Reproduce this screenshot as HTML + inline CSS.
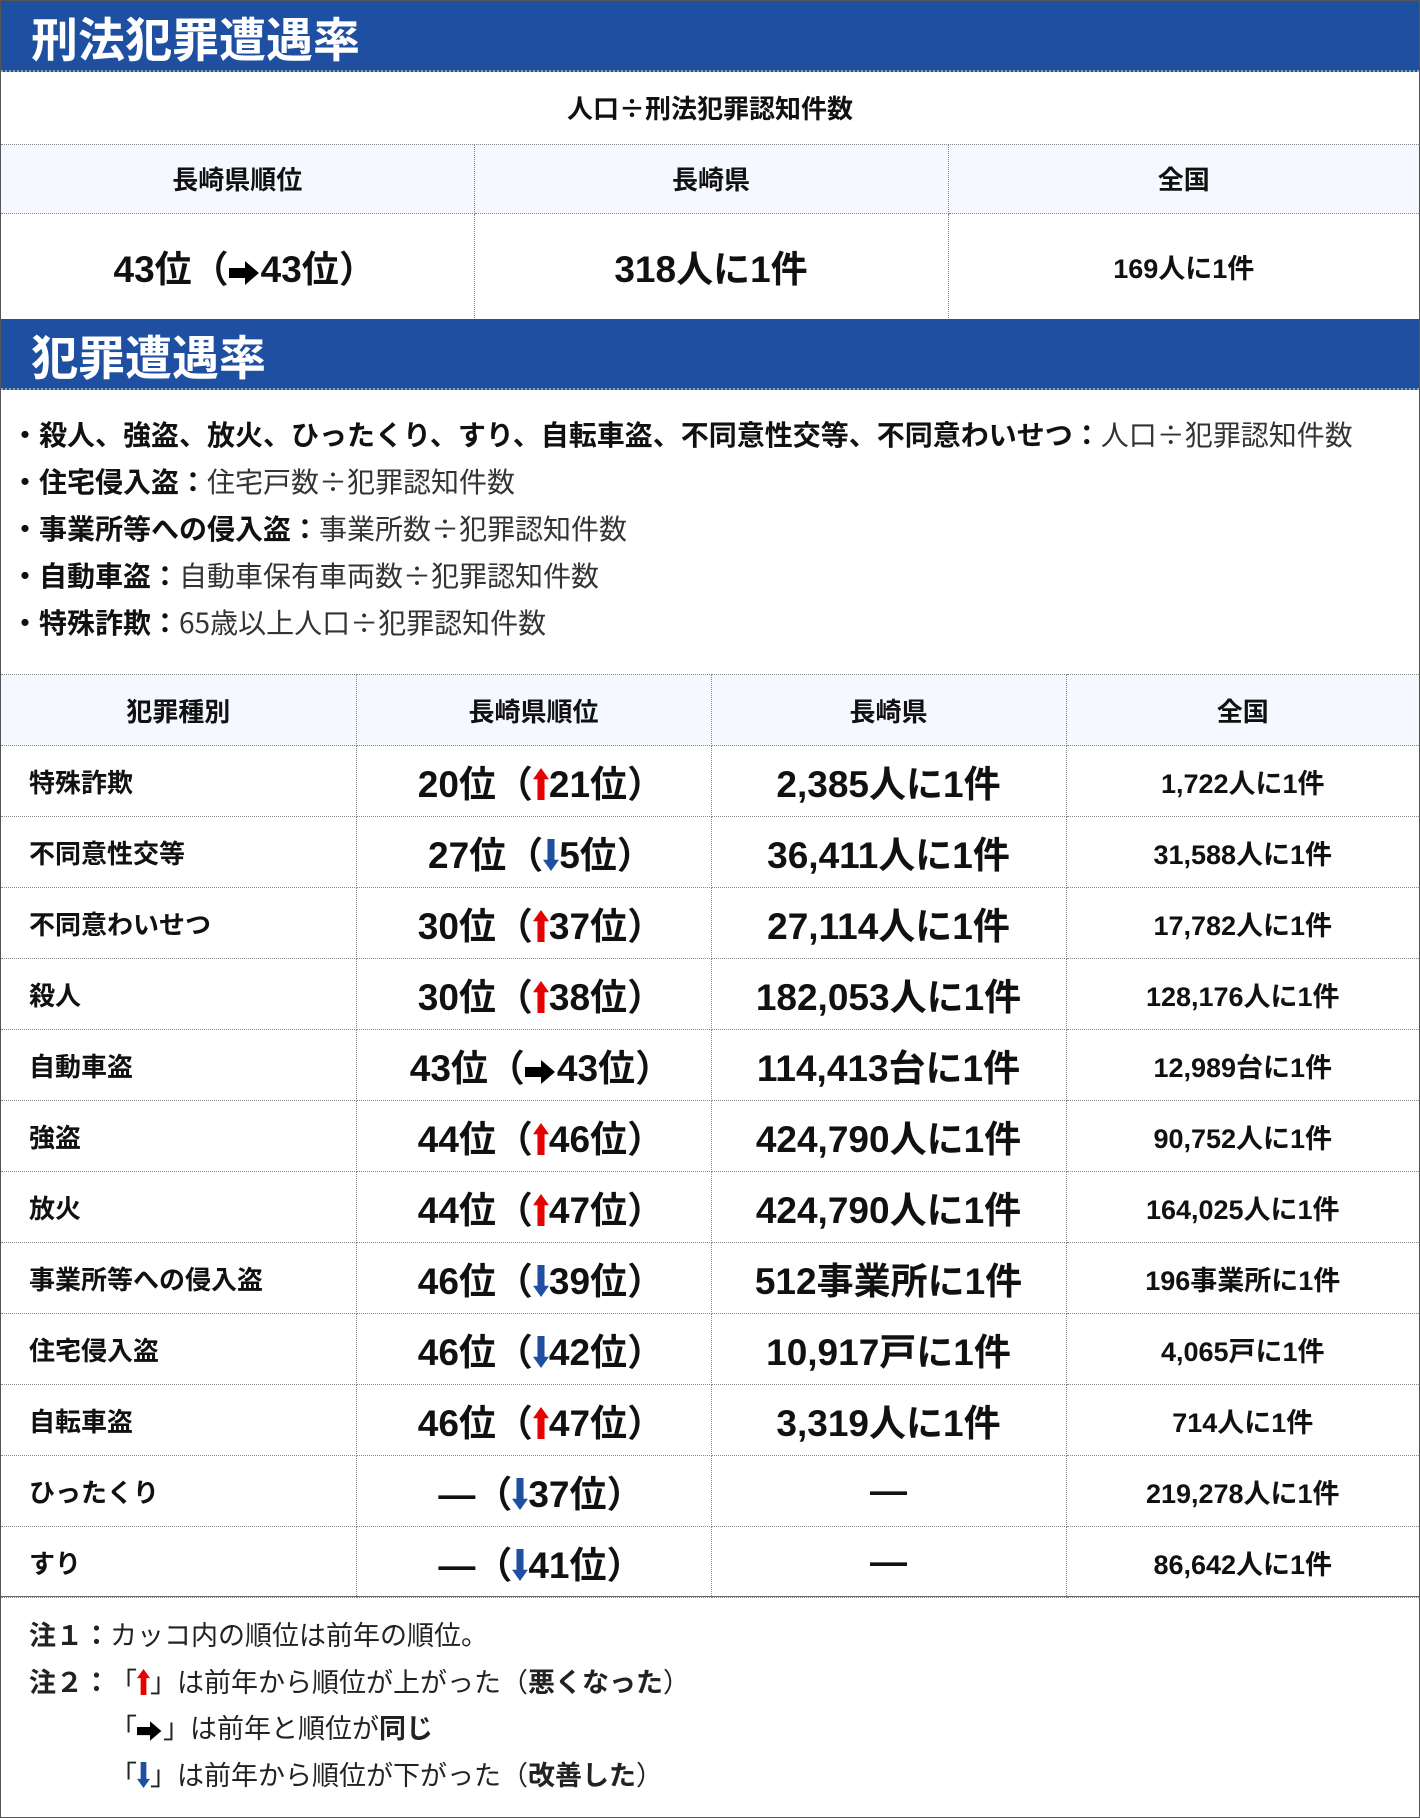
<!DOCTYPE html>
<html><head><meta charset="utf-8">
<style>
*{box-sizing:border-box;margin:0;padding:0}
body{width:1420px;height:1818px;background:#fff;font-family:"Liberation Sans","Noto Sans CJK JP",sans-serif;color:#111;overflow:hidden}
.wrap{position:absolute;left:0;top:0;width:1420px;height:1818px;border:1px solid #555}
.bar{position:absolute;left:0;width:1418px;height:71px;background:#1f4fa1;color:#fff;font-weight:bold;font-size:47px;line-height:71px;padding-left:30px;border-bottom:2px dotted #8aa;font-family:"Noto Sans CJK JP",sans-serif}
table{position:absolute;left:0;border-collapse:collapse;width:1418px;table-layout:fixed}
td{border:1px dotted #888;text-align:center;font-weight:bold;vertical-align:middle}
tr td:first-child{border-left:none}tr td:last-child{border-right:none}
.hd td{background:#f5f8fe;font-size:26px}
.b{font-size:37px}
.m{font-size:27px}
.p{font-family:"Noto Sans CJK JP",sans-serif}
.o,.c{display:inline-block;width:1em;font-family:"Noto Sans CJK JP",sans-serif}
.o{text-align:right}.c{text-align:left}
td .o{width:1em;text-align:center}
td .c{width:0.6em;text-align:left}
.nm{text-align:left;padding-left:28px;font-size:26px}
.up,.dn,.rt{display:inline-block;vertical-align:-3px}
.bul{position:absolute;left:10px;top:410px;font-size:28px;line-height:47px;font-family:"Noto Sans CJK JP",sans-serif}
.bul b{font-weight:bold}.bul span{color:#333;font-weight:normal}
.notes{position:absolute;left:28px;top:1610px;font-size:27px;line-height:46.5px;color:#222;font-family:"Noto Sans CJK JP",sans-serif}
</style></head><body>
<div class="wrap">
<div class="bar" style="top:0">刑法犯罪遭遇率</div>
<table style="top:71px">
<colgroup><col style="width:473px"><col style="width:474px"><col></colgroup>
<tr style="height:72px"><td colspan="3" class="p" style="font-size:26px;border-top:none">人口÷刑法犯罪認知件数</td></tr>
<tr class="hd" style="height:69px"><td>長崎県順位</td><td>長崎県</td><td>全国</td></tr>
<tr style="height:106px"><td class="b">43位<span class="o">（</span><svg class="rt" width="32" height="24" viewBox="0 0 16 12"><path d="M0 3.5H8V0L15 6L8 12V8.5H0Z" fill="#000"/></svg>43位<span class="c">）</span></td><td class="b">318人に1件</td><td class="m">169人に1件</td></tr>
</table>
<div class="bar" style="top:318px">犯罪遭遇率</div>
<div class="bul">
<div><b>・殺人、強盗、放火、ひったくり、すり、自転車盗、不同意性交等、不同意わいせつ：</b><span>人口÷犯罪認知件数</span></div>
<div><b>・住宅侵入盗：</b><span>住宅戸数÷犯罪認知件数</span></div>
<div><b>・事業所等への侵入盗：</b><span>事業所数÷犯罪認知件数</span></div>
<div><b>・自動車盗：</b><span>自動車保有車両数÷犯罪認知件数</span></div>
<div><b>・特殊詐欺：</b><span>65歳以上人口÷犯罪認知件数</span></div>
</div>
<table style="top:673px">
<colgroup><col style="width:355px"><col style="width:355px"><col style="width:355px"><col></colgroup>
<tr class="hd" style="height:71px"><td>犯罪種別</td><td>長崎県順位</td><td>長崎県</td><td>全国</td></tr>
<tr style="height:71px"><td class="nm">特殊詐欺</td><td class="b">20位<span class="o">（</span><svg class="up" width="16" height="32" viewBox="0 0 10 20"><path d="M5 0L10 7H7.2V20H2.8V7H0Z" fill="#e60000"/></svg>21位<span class="c">）</span></td><td class="b">2,385人に1件</td><td class="m">1,722人に1件</td></tr>
<tr style="height:71px"><td class="nm">不同意性交等</td><td class="b">27位<span class="o">（</span><svg class="dn" width="16" height="32" viewBox="0 0 10 20"><path d="M5 20L10 13H7.2V0H2.8V13H0Z" fill="#1f4fa1"/></svg>5位<span class="c">）</span></td><td class="b">36,411人に1件</td><td class="m">31,588人に1件</td></tr>
<tr style="height:71px"><td class="nm">不同意わいせつ</td><td class="b">30位<span class="o">（</span><svg class="up" width="16" height="32" viewBox="0 0 10 20"><path d="M5 0L10 7H7.2V20H2.8V7H0Z" fill="#e60000"/></svg>37位<span class="c">）</span></td><td class="b">27,114人に1件</td><td class="m">17,782人に1件</td></tr>
<tr style="height:71px"><td class="nm">殺人</td><td class="b">30位<span class="o">（</span><svg class="up" width="16" height="32" viewBox="0 0 10 20"><path d="M5 0L10 7H7.2V20H2.8V7H0Z" fill="#e60000"/></svg>38位<span class="c">）</span></td><td class="b">182,053人に1件</td><td class="m">128,176人に1件</td></tr>
<tr style="height:71px"><td class="nm">自動車盗</td><td class="b">43位<span class="o">（</span><svg class="rt" width="32" height="24" viewBox="0 0 16 12"><path d="M0 3.5H8V0L15 6L8 12V8.5H0Z" fill="#000"/></svg>43位<span class="c">）</span></td><td class="b">114,413台に1件</td><td class="m">12,989台に1件</td></tr>
<tr style="height:71px"><td class="nm">強盗</td><td class="b">44位<span class="o">（</span><svg class="up" width="16" height="32" viewBox="0 0 10 20"><path d="M5 0L10 7H7.2V20H2.8V7H0Z" fill="#e60000"/></svg>46位<span class="c">）</span></td><td class="b">424,790人に1件</td><td class="m">90,752人に1件</td></tr>
<tr style="height:71px"><td class="nm">放火</td><td class="b">44位<span class="o">（</span><svg class="up" width="16" height="32" viewBox="0 0 10 20"><path d="M5 0L10 7H7.2V20H2.8V7H0Z" fill="#e60000"/></svg>47位<span class="c">）</span></td><td class="b">424,790人に1件</td><td class="m">164,025人に1件</td></tr>
<tr style="height:71px"><td class="nm">事業所等への侵入盗</td><td class="b">46位<span class="o">（</span><svg class="dn" width="16" height="32" viewBox="0 0 10 20"><path d="M5 20L10 13H7.2V0H2.8V13H0Z" fill="#1f4fa1"/></svg>39位<span class="c">）</span></td><td class="b">512事業所に1件</td><td class="m">196事業所に1件</td></tr>
<tr style="height:71px"><td class="nm">住宅侵入盗</td><td class="b">46位<span class="o">（</span><svg class="dn" width="16" height="32" viewBox="0 0 10 20"><path d="M5 20L10 13H7.2V0H2.8V13H0Z" fill="#1f4fa1"/></svg>42位<span class="c">）</span></td><td class="b">10,917戸に1件</td><td class="m">4,065戸に1件</td></tr>
<tr style="height:71px"><td class="nm">自転車盗</td><td class="b">46位<span class="o">（</span><svg class="up" width="16" height="32" viewBox="0 0 10 20"><path d="M5 0L10 7H7.2V20H2.8V7H0Z" fill="#e60000"/></svg>47位<span class="c">）</span></td><td class="b">3,319人に1件</td><td class="m">714人に1件</td></tr>
<tr style="height:71px"><td class="nm">ひったくり</td><td class="b">—<span class="o">（</span><svg class="dn" width="16" height="32" viewBox="0 0 10 20"><path d="M5 20L10 13H7.2V0H2.8V13H0Z" fill="#1f4fa1"/></svg>37位<span class="c">）</span></td><td class="b">—</td><td class="m">219,278人に1件</td></tr>
<tr style="height:71px"><td class="nm">すり</td><td class="b">—<span class="o">（</span><svg class="dn" width="16" height="32" viewBox="0 0 10 20"><path d="M5 20L10 13H7.2V0H2.8V13H0Z" fill="#1f4fa1"/></svg>41位<span class="c">）</span></td><td class="b">—</td><td class="m">86,642人に1件</td></tr>
</table>
<div style="position:absolute;left:0;top:1595px;width:1418px;border-top:1px solid #666"></div>
<div class="notes">
<div><b>注１：</b>カッコ内の順位は前年の順位。</div>
<div><b>注２：</b><span class="o">「</span><svg class="up" width="13" height="26" viewBox="0 0 10 20"><path d="M5 0L10 7H7.2V20H2.8V7H0Z" fill="#e60000"/></svg><span class="c">」</span>は前年から順位が上がった<span class="o">（</span><b>悪くなった</b><span class="c">）</span></div>
<div style="padding-left:81px"><span class="o">「</span><svg class="rt" width="26" height="20" viewBox="0 0 16 12"><path d="M0 3.5H8V0L15 6L8 12V8.5H0Z" fill="#000"/></svg><span class="c">」</span>は前年と順位が<b>同じ</b></div>
<div style="padding-left:81px"><span class="o">「</span><svg class="dn" width="13" height="26" viewBox="0 0 10 20"><path d="M5 20L10 13H7.2V0H2.8V13H0Z" fill="#1f4fa1"/></svg><span class="c">」</span>は前年から順位が下がった<span class="o">（</span><b>改善した</b><span class="c">）</span></div>
</div>
</div>
</body></html>
